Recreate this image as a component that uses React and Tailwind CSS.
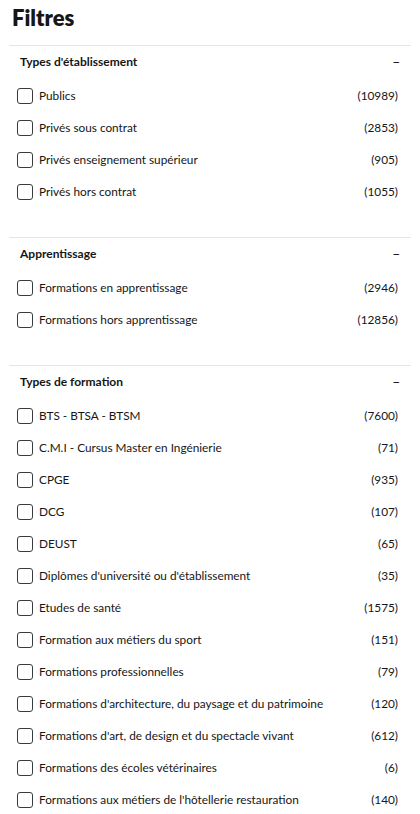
const sections = [
  {
    title: "Types d'établissement",
    items: [
      ['Publics', 10989],
      ['Privés sous contrat', 2853],
      ['Privés enseignement supérieur', 905],
      ['Privés hors contrat', 1055],
    ],
  },
  {
    title: 'Apprentissage',
    items: [
      ['Formations en apprentissage', 2946],
      ['Formations hors apprentissage', 12856],
    ],
  },
  {
    title: 'Types de formation',
    items: [
      ['BTS - BTSA - BTSM', 7600],
      ['C.M.I - Cursus Master en Ingénierie', 71],
      ['CPGE', 935],
      ['DCG', 107],
      ['DEUST', 65],
      ["Diplômes d'université ou d'établissement", 35],
      ['Etudes de santé', 1575],
      ['Formation aux métiers du sport', 151],
      ['Formations professionnelles', 79],
      ["Formations d'architecture, du paysage et du patrimoine", 120],
      ["Formations d'art, de design et du spectacle vivant", 612],
      ['Formations des écoles vétérinaires', 6],
      ["Formations aux métiers de l'hôtellerie restauration", 140],
    ],
  },
];

function Section({ title, items }) {
  return (
    <div className="border-t border-[#e5e5e5] pb-[29px]">
      <div className="flex h-8 items-center justify-between pl-[11px] pr-[11px]">
        <span className="text-[12px] font-bold text-[#161616]">{title}</span>
        <span className="text-[13px] leading-none text-[#161616]">−</span>
      </div>
      <ul className="mt-[2px]">
        {items.map(([label, count]) => (
          <li key={label} className="flex h-8 items-center pl-2 pr-[13px] text-[11.8px] text-[#161616]">
            <span className="mr-[6px] h-4 w-4 shrink-0 rounded-[3px] border border-[#3a3a3a] bg-white"></span>
            <span className="flex-1">{label}</span>
            <span>({count})</span>
          </li>
        ))}
      </ul>
    </div>
  );
}

export default function App() {
  return (
    <div className="w-[420px] bg-white font-['Lato',sans-serif]">
      <h1 className="pl-3 pt-[4px] pb-[13px] text-[22px] font-extrabold leading-7 text-[#161616]">Filtres</h1>
      <div className="mx-[9px]">
        {sections.map((s) => (
          <Section key={s.title} {...s} />
        ))}
      </div>
    </div>
  );
}
